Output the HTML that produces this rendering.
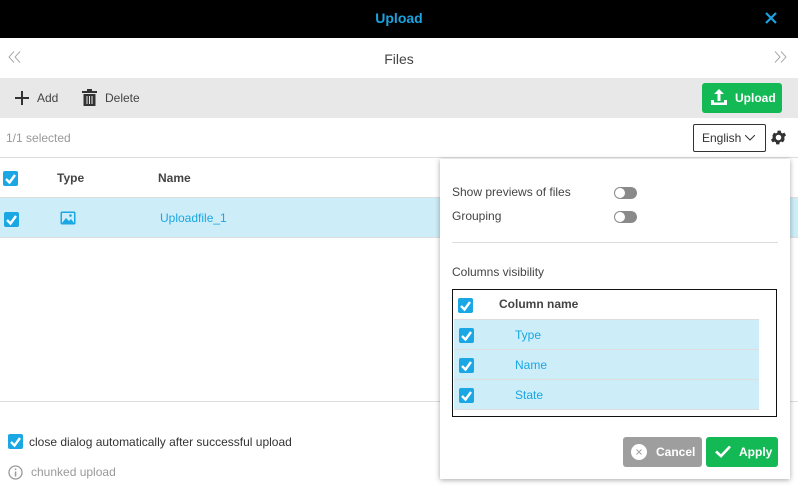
<!DOCTYPE html>
<html><head><style>
*{box-sizing:border-box;margin:0;padding:0}
body{width:798px;height:491px;overflow:hidden;font-family:"Liberation Sans",Arial,sans-serif;background:#fff;position:relative;font-size:12px;color:#333}
.a{position:absolute}
.cb{position:absolute;width:15px;height:15px;background:#1aa7e3;border-radius:2px}
.cb svg{position:absolute;left:1px;top:1px}
.tg{position:absolute;width:23px;height:12px;border-radius:6px;background:#8a8a8a}
.tg:after{content:"";position:absolute;left:1px;top:1px;width:10px;height:10px;border-radius:50%;background:#fff}
</style></head><body>
<div class="a" style="left:0;top:0;width:798px;height:38px;background:#000"></div>
<div class="a" style="left:0;top:10px;width:798px;text-align:center;color:#1ba3e0;font-weight:bold;font-size:14px">Upload</div>
<svg class="a" style="left:765px;top:12px" width="12" height="12"><path d="M1 1L11 11M11 1L1 11" stroke="#1ba3e0" stroke-width="2.2"/></svg>
<svg class="a" style="left:8px;top:51px" width="14" height="12"><path d="M6 0.5L1 6L6 11.5M12 0.5L7 6L12 11.5" stroke="#aaa" fill="none" stroke-width="1"/></svg>
<svg class="a" style="left:774px;top:51px" width="14" height="12"><path d="M1 0.5L6 6L1 11.5M7 0.5L12 6L7 11.5" stroke="#aaa" fill="none" stroke-width="1"/></svg>
<div class="a" style="left:0;top:51px;width:798px;text-align:center;font-size:14px;color:#444">Files</div>
<div class="a" style="left:0;top:78px;width:798px;height:40px;background:#e8e8e8"></div>
<svg class="a" style="left:15px;top:91px" width="14" height="14"><path d="M7 0V14M0 7H14" stroke="#333" stroke-width="2"/></svg>
<div class="a" style="left:37px;top:91px;color:#444">Add</div>
<svg class="a" style="left:82px;top:89px" width="15" height="17"><rect x="0" y="2" width="15" height="2" fill="#333"/><rect x="5" y="0" width="5" height="2" fill="#333"/><path d="M1.5 5H13.5V17H1.5Z" fill="#333"/><path d="M5 7V15M7.5 7V15M10 7V15" stroke="#e8e8e8" stroke-width="1"/></svg>
<div class="a" style="left:105px;top:91px;color:#444">Delete</div>
<div class="a" style="left:702px;top:83px;width:80px;height:30px;background:#13b955;border-radius:3px"></div>
<svg class="a" style="left:710px;top:88px" width="18" height="18"><path d="M9 1L4 6H7.5V13H10.5V6H14Z M1 12V17H17V12H14V14.5H4V12Z" fill="#fff"/></svg>
<div class="a" style="left:735px;top:91px;color:#fff;font-weight:bold">Upload</div>
<div class="a" style="left:6px;top:131px;color:#999">1/1 selected</div>
<div class="a" style="left:693px;top:124px;width:73px;height:28px;border:1px solid #333;border-radius:2px;background:#fff"></div>
<div class="a" style="left:702px;top:131px;color:#333">English</div>
<svg class="a" style="left:745px;top:135px" width="10" height="6"><path d="M0 0L5 5L10 0" stroke="#333" fill="none"/></svg>
<svg class="a" style="left:769px;top:128px" width="19" height="19" viewBox="0 0 24 24"><path fill="#333" d="M19.4 13c.04-.33.06-.66.06-1s-.02-.67-.06-1l2.1-1.65-2-3.460-2.48 1a7.3 7.3 0 0 0-1.73-1l-.38-2.65h-4l-.38 2.65c-.63.25-1.2.6-1.73 1l-2.48-1-2 3.46L4.6 11c-.04.33-.06.66-.06 1s.02.67.06 1l-2.1 1.65 2 3.46 2.48-1c.53.4 1.1.75 1.73 1l.38 2.65h4l.38-2.65c.63-.25 1.2-.6 1.730-1l2.48 1 2-3.46zM12 15.5A3.5 3.5 0 1 1 12 8.5a3.5 3.5 0 0 1 0 7z"/></svg>
<div class="a" style="left:0;top:157px;width:798px;height:1px;background:#ddd"></div>
<div class="cb" style="left:3px;top:171px"><svg width="13" height="13"><path d="M2 7L5.5 10.5L11 3" stroke="#fff" stroke-width="2.4" fill="none"/></svg></div>
<div class="a" style="left:57px;top:171px;font-weight:bold;color:#444">Type</div>
<div class="a" style="left:158px;top:171px;font-weight:bold;color:#444">Name</div>
<div class="a" style="left:0;top:197px;width:798px;height:41px;background:#cdedf8;border-top:1px solid #ddd;border-bottom:1px solid #ddd"></div>
<div class="cb" style="left:4px;top:212px"><svg width="13" height="13"><path d="M2 7L5.5 10.5L11 3" stroke="#fff" stroke-width="2.4" fill="none"/></svg></div>
<svg class="a" style="left:60px;top:211px" width="16" height="14"><rect x="0.5" y="0.5" width="15" height="13" rx="1.5" fill="#1aa7e3"/><rect x="2" y="2" width="12" height="10" fill="#cdedf8"/><path d="M2 12L6 7L9 10L11 8L14 12Z" fill="#1aa7e3"/><circle cx="10.5" cy="4.5" r="1.3" fill="#1aa7e3"/></svg>
<div class="a" style="left:160px;top:211px;color:#1aa7e3">Uploadfile_1</div>
<div class="a" style="left:0;top:401px;width:798px;height:1px;background:#ddd"></div>
<div class="cb" style="left:8px;top:434px"><svg width="13" height="13"><path d="M2 7L5.5 10.5L11 3" stroke="#fff" stroke-width="2.4" fill="none"/></svg></div>
<div class="a" style="left:29px;top:435px;color:#333">close dialog automatically after successful upload</div>
<svg class="a" style="left:8px;top:465px" width="15" height="15"><circle cx="7.5" cy="7.5" r="6.5" stroke="#999" stroke-width="1.3" fill="none"/><rect x="6.8" y="6.5" width="1.5" height="5" fill="#999"/><rect x="6.8" y="3.5" width="1.5" height="1.6" fill="#999"/></svg>
<div class="a" style="left:31px;top:465px;color:#999">chunked upload</div>

<div class="a" style="left:440px;top:159px;width:350px;height:320px;background:#fff;box-shadow:0 1px 5px rgba(0,0,0,.35)"></div>
<div class="a" style="left:452px;top:185px;color:#444">Show previews of files</div>
<div class="tg" style="left:614px;top:187px"></div>
<div class="a" style="left:452px;top:209px;color:#444">Grouping</div>
<div class="tg" style="left:614px;top:211px"></div>
<div class="a" style="left:452px;top:242px;width:326px;height:1px;background:#ddd"></div>
<div class="a" style="left:452px;top:265px;color:#444">Columns visibility</div>
<div class="a" style="left:452px;top:289px;width:325px;height:128px;border:1.5px solid #111"></div>
<div class="cb" style="left:458px;top:298px"><svg width="13" height="13"><path d="M2 7L5.5 10.5L11 3" stroke="#fff" stroke-width="2.4" fill="none"/></svg></div>
<div class="a" style="left:499px;top:297px;font-weight:bold;color:#444">Column name</div>
<div class="a" style="left:454px;top:319px;width:305px;height:91px;background:#cdedf8;border-top:1px solid #ddd"></div>
<div class="a" style="left:454px;top:349px;width:305px;height:1px;background:#ddd"></div>
<div class="a" style="left:454px;top:379px;width:305px;height:1px;background:#ddd"></div>
<div class="a" style="left:454px;top:409px;width:305px;height:1px;background:#ddd"></div>
<div class="cb" style="left:459px;top:328px"><svg width="13" height="13"><path d="M2 7L5.5 10.5L11 3" stroke="#fff" stroke-width="2.4" fill="none"/></svg></div>
<div class="a" style="left:515px;top:328px;color:#1aa7e3">Type</div>
<div class="cb" style="left:459px;top:358px"><svg width="13" height="13"><path d="M2 7L5.5 10.5L11 3" stroke="#fff" stroke-width="2.4" fill="none"/></svg></div>
<div class="a" style="left:515px;top:358px;color:#1aa7e3">Name</div>
<div class="cb" style="left:459px;top:388px"><svg width="13" height="13"><path d="M2 7L5.5 10.5L11 3" stroke="#fff" stroke-width="2.4" fill="none"/></svg></div>
<div class="a" style="left:515px;top:388px;color:#1aa7e3">State</div>
<div class="a" style="left:623px;top:437px;width:79px;height:30px;background:#9e9e9e;border-radius:3px"></div>
<svg class="a" style="left:631px;top:444px" width="16" height="16"><circle cx="8" cy="8" r="8" fill="#fff"/><path d="M5.5 5.5L10.5 10.5M10.5 5.5L5.5 10.5" stroke="#aaa" stroke-width="1.2"/></svg>
<div class="a" style="left:656px;top:445px;color:#fff;font-weight:bold">Cancel</div>
<div class="a" style="left:706px;top:437px;width:72px;height:30px;background:#13b955;border-radius:3px"></div>
<svg class="a" style="left:715px;top:445px" width="16" height="13"><path d="M1 6.5L6 11L15 1.5" stroke="#fff" stroke-width="2.6" fill="none"/></svg>
<div class="a" style="left:739px;top:445px;color:#fff;font-weight:bold">Apply</div>
</body></html>
